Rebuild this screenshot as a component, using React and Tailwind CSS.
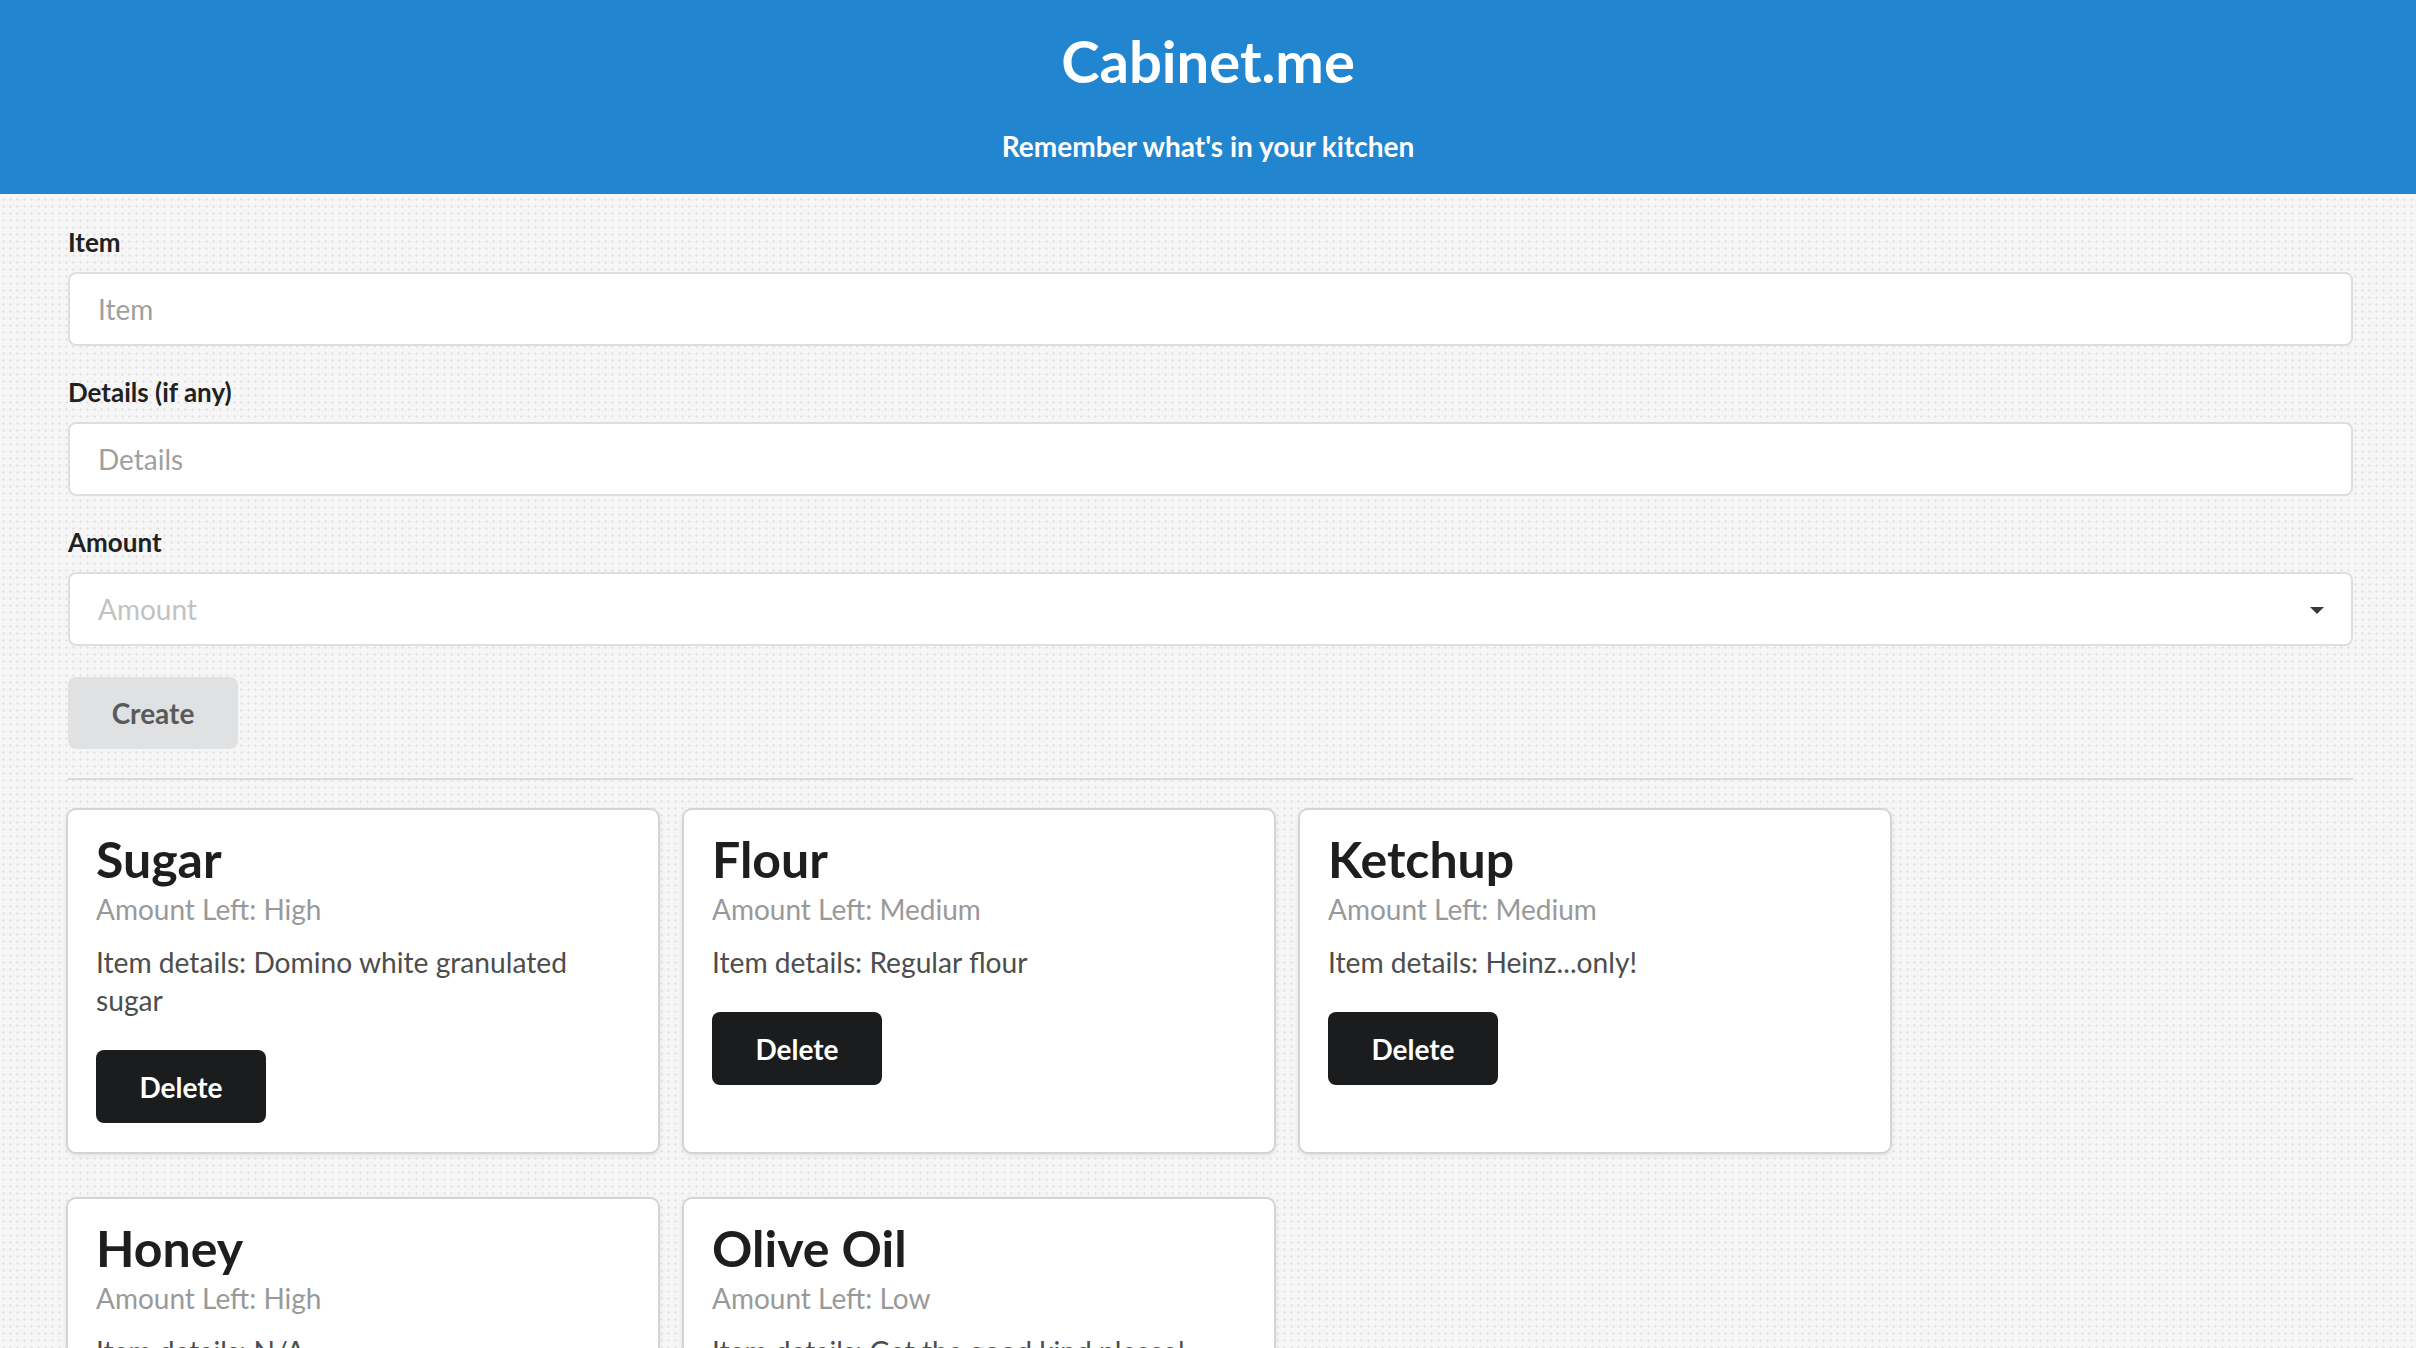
import React from 'react';

const items = [
  { name: 'Sugar', amount: 'High', details: 'Domino white granulated sugar' },
  { name: 'Flour', amount: 'Medium', details: 'Regular flour' },
  { name: 'Ketchup', amount: 'Medium', details: 'Heinz...only!' },
  { name: 'Honey', amount: 'High', details: 'N/A' },
  { name: 'Olive Oil', amount: 'Low', details: 'Get the good kind please!' },
];

const Field = ({ label, placeholder }) => (
  <div className="mb-[31px]">
    <label className="block text-[26px] leading-[31px] font-bold text-[#212121] mb-[14px]">{label}</label>
    <input
      placeholder={placeholder}
      className="block w-full h-[74px] bg-white border-2 border-[#dedede] rounded-[8px] px-[28px] text-[28px] text-[#212121] placeholder:text-[#9f9f9f] outline-none font-['Lato',sans-serif]"
    />
  </div>
);

const ItemCard = ({ item }) => (
  <div className="w-[590px] bg-white rounded-[8px] shadow-[0_2px_6px_0_#d4d4d5,0_0_0_2px_#d4d4d5] pt-[24px] px-[28px] pb-[29px]">
    <div className="text-[50px] leading-[50px] font-bold text-[#1e1e1e]">{item.name}</div>
    <div className="mt-[5px] text-[28px] leading-[40px] text-[#999999]">Amount Left: {item.amount}</div>
    <p className="mt-[14px] text-[28.2px] leading-[38px] text-[#4d4d4d]">Item details: {item.details}</p>
    <button className="mt-[31px] w-[170px] h-[73px] rounded-[8px] bg-[#1b1c1d] text-white text-[28px] font-bold">
      Delete
    </button>
  </div>
);

export default function App() {
  return (
    <div className="min-h-screen font-['Lato',sans-serif] bg-[#f6f6f6] bg-[radial-gradient(#e4e4e4_1px,transparent_1.2px)] bg-[length:7px_7px]">
      {/* header */}
      <header className="h-[194px] bg-[#2185d0] text-white text-center pt-[32px]">
        <h1 className="text-[58px] leading-[58px] font-bold">Cabinet.me</h1>
        <p className="mt-[42px] text-[28px] leading-[28px] font-bold">Remember what's in your kitchen</p>
      </header>

      <main className="pl-[68px] pr-[63px] pt-[33px] pb-[60px]">
        <Field label="Item" placeholder="Item" />
        <Field label="Details (if any)" placeholder="Details" />

        <div className="mb-[31px]">
          <label className="block text-[26px] leading-[31px] font-bold text-[#212121] mb-[14px]">Amount</label>
          <div className="relative flex items-center w-full h-[74px] bg-white border-2 border-[#dedede] rounded-[8px] px-[28px]">
            <span className="text-[28px] text-[#c2c2c2]">Amount</span>
            <span className="absolute right-[27px] top-[33px] w-0 h-0 border-l-[7px] border-r-[7px] border-t-[7px] border-l-transparent border-r-transparent border-t-[#3a3a3a]" />
          </div>
        </div>

        <button className="w-[170px] h-[72px] rounded-[8px] bg-[#e0e1e2] text-[#5a5a5a] text-[28px] font-bold">
          Create
        </button>

        <hr className="mt-[29px] mb-[30px] border-0 border-t-2 border-[#d9d9da]" />

        <div className="flex flex-wrap gap-x-[26px] gap-y-[47px]">
          {items.map((item) => (
            <ItemCard key={item.name} item={item} />
          ))}
        </div>
      </main>
    </div>
  );
}
